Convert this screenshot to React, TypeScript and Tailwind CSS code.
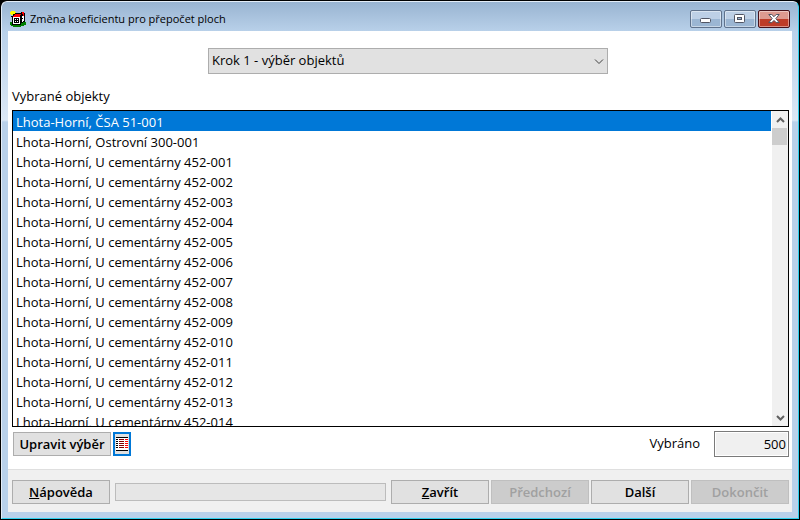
import { useRef, useState } from 'react';
import clsx from 'clsx';

const objects = [
  'Lhota-Horní, ČSA 51-001',
  'Lhota-Horní, Ostrovní 300-001',
  ...Array.from({ length: 14 }, (_, i) => `Lhota-Horní, U cementárny 452-${String(i + 1).padStart(3, '0')}`),
];

const btn =
  'h-6 w-[98px] shrink-0 border border-[#adadad] bg-[#e1e1e1] font-semibold leading-none disabled:border-[#bfbfbf] disabled:bg-[#cccccc] disabled:text-[#a0a0a0]';

function HouseIcon() {
  return (
    <svg width="16" height="16" viewBox="0 0 16 16" shapeRendering="crispEdges" aria-hidden="true">
      <path d="M1 0h4v1h1v3H1V3H0V1h1z" fill="#ffff00" />
      <path d="M0 11h3v-1h11v1h2v3h-2v1h-3v1H3v-1H1v-1H0z" fill="#008000" />
      <path d="M5 2h6V1h3v1h1v9h-2v1h-2v2H2V6H1V5h2V3h2z" fill="#000" />
      <path d="M5 3h6v1h-1v2H3V5h1V4h1z" fill="#ff0000" />
      <path d="M12 1h2v4h-1V3h-1z" fill="#ff0000" />
      <path d="M3 6h7v7H3z" fill="#fff" />
      <path d="M12 5h2v5h-1v1h-1z" fill="#fff" />
      <path d="M4 7h5v5H4z" fill="#000" />
      <path d="M5 8h1v1H5zM7 8h1v1H7zM5 10h1v1H5zM7 10h1v1H7z" fill="#fff" />
      <path d="M12 7h1v1h-1z" fill="#000" />
    </svg>
  );
}

function ListIcon() {
  return (
    <svg width="12" height="14" viewBox="0 0 12 14" shapeRendering="crispEdges" aria-hidden="true">
      <path d="M0 0h12v14H0z" fill="#fff" />
      <path d="M0 0h12v1H0zM0 13h12v1H0z" fill="#000" />
      <path d="M0 2h2v1H0zM0 4h2v1H0zM0 6h2v1H0zM0 8h2v1H0zM0 10h2v1H0z" fill="#000" />
      <path d="M3 2h5v1H3zM3 4h5v1H3zM3 6h5v1H3zM3 8h5v1H3zM3 10h5v1H3z" fill="#800000" />
      <path d="M9 2h3v1H9zM9 4h3v1H9zM9 6h3v1H9zM9 8h3v1H9zM9 10h3v1H9z" fill="#ff0000" />
    </svg>
  );
}

function Chevron({ up = false }: { up?: boolean }) {
  return (
    <svg width="9" height="6" viewBox="0 0 9 6" fill="none" stroke="#606060" strokeWidth="2" aria-hidden="true">
      <path d={up ? 'M1 5l3.5-3.5L8 5' : 'M1 1l3.5 3.5L8 1'} />
    </svg>
  );
}

function TitleBar() {
  const caption = 'flex h-[18px] w-8 items-center justify-center rounded-[2px] border shadow-[inset_0_0_0_1px_#ffffff70]';
  const blue = 'border-[#5f728c] bg-linear-to-b from-[#bdd0e6] from-50% to-[#9bb6d3] to-50%';
  return (
    <header className="flex h-[29px] shrink-0 items-center justify-between px-[2px] pt-[5px]">
      <div className="flex min-w-0 items-center gap-1">
        <HouseIcon />
        <h1 className="truncate text-[11px]">Změna koeficientu pro přepočet ploch</h1>
      </div>
      <div className="flex gap-[2px]">
        <button className={clsx(caption, blue)} aria-label="Minimalizovat">
          <svg width="12" height="8" viewBox="0 0 12 8" aria-hidden="true">
            <rect x=".5" y="3.5" width="10" height="4" rx="1" fill="#fff" stroke="#515563" />
          </svg>
        </button>
        <button className={clsx(caption, blue)} aria-label="Maximalizovat">
          <svg width="12" height="10" viewBox="0 0 12 10" aria-hidden="true">
            <rect x=".5" y=".5" width="10" height="8" rx="1" fill="#fff" stroke="#515563" />
            <rect x="3.5" y="3.5" width="4" height="2" fill="#9bb6d3" stroke="#515563" />
          </svg>
        </button>
        <button
          className={clsx(caption, 'border-[#46111a] bg-linear-to-b from-[#dd9a90] from-50% to-[#bd3c28] to-50%')}
          aria-label="Zavřít okno"
        >
          <svg width="12" height="10" viewBox="0 0 12 10" aria-hidden="true">
            <path d="M.8.5h3L6 2.700 8.200.5h3L7.800 4.600l3.400 4h-3L6 6.400 3.800 8.600h-3l3.400-4z" fill="#fff" stroke="#515563" />
          </svg>
        </button>
      </div>
    </header>
  );
}

function ObjectList() {
  const [selected, setSelected] = useState(0);
  const list = useRef<HTMLUListElement>(null);
  const scroll = (top: number) => list.current?.scrollBy({ top });

  return (
    <div className="flex min-h-0 flex-1 border border-black">
      <ul
        ref={list}
        role="listbox"
        aria-labelledby="objects-label"
        className="mr-px min-w-0 flex-1 overflow-y-auto [scrollbar-width:none]"
      >
        {objects.map((name, i) => (
          <li
            key={name}
            role="option"
            aria-selected={i === selected}
            onClick={() => setSelected(i)}
            className={clsx('h-5 truncate px-[3px] leading-[22px]', i === selected && 'bg-[#0078d7] text-white')}
          >
            {name}
          </li>
        ))}
      </ul>
      {/* posuvník */}
      <div className="flex w-4 flex-col bg-[#f0f0f0]">
        <button className="flex h-[17px] items-center justify-center" onClick={() => scroll(-20)} aria-label="Nahoru">
          <Chevron up />
        </button>
        <div className="mr-px h-[17px] bg-[#cdcdcd]" />
        <button className="mt-auto flex h-[17px] items-center justify-center" onClick={() => scroll(20)} aria-label="Dolů">
          <Chevron />
        </button>
      </div>
    </div>
  );
}

export default function App() {
  return (
    <div className="h-screen bg-black font-['Open_Sans',sans-serif] text-[13px] text-black">
      <div className="h-full overflow-hidden rounded-t-md border border-black">
        <div className="flex h-full flex-col rounded-t-md border border-t-[#e4edf7] border-r-[#2fd0ee] border-b-[#2fd0ee] border-l-[#e4edf7] bg-[linear-gradient(#99b4d1_0px,#b9d1ea_30px,#dce8f5_118px,#b9d1ea_120px)] px-[6px] pb-[6px]">
          <TitleBar />
          <main className="flex min-h-0 flex-1 flex-col bg-white pt-[17px] pr-[3px] pb-3 pl-1">
            <div className="flex justify-center pl-[15px]">
              <div className="relative w-[400px]">
                <select
                  aria-label="Krok"
                  className="h-[26px] w-full appearance-none border border-[#adadad] bg-[#e1e1e1] px-[3px]"
                >
                  <option>Krok 1 - výběr objektů</option>
                </select>
                <svg
                  className="pointer-events-none absolute top-[11px] right-1"
                  width="10"
                  height="6"
                  viewBox="0 0 10 6"
                  fill="none"
                  stroke="#404040"
                  aria-hidden="true"
                >
                  <path d="M1 .5l4 4 4-4" />
                </svg>
              </div>
            </div>
            <h2 id="objects-label" className="mt-3 mb-1 leading-5">Vybrané objekty</h2>
            <ObjectList />
            <div className="mt-1 flex h-[26px] items-center">
              <button className={clsx(btn, 'ml-px')}>Upravit výběr</button>
              <button
                className="ml-[2px] flex h-6 w-[18px] items-center justify-center border-2 border-[#0078d7] bg-[#e1e1e1]"
                aria-label="Seznam"
              >
                <ListIcon />
              </button>
              <label htmlFor="count" className="mr-[14px] ml-auto">Vybráno</label>
              <input
                id="count"
                readOnly
                value="500"
                className="h-[26px] w-[75px] border border-[#7a7a7a] bg-[#f0f0f0] px-[2px] text-right shadow-[inset_0_0_0_1px_#fff] outline-none"
              />
            </div>
          </main>
          <footer className="flex shrink-0 items-center gap-[5px] border-t border-[#dfdfdf] bg-[#f0f0f0] pt-[10px] pr-[3px] pb-2 pl-1">
            <button className={btn}><u>N</u>ápověda</button>
            <div className="h-[18px] flex-1 border border-[#bcbcbc] bg-[#e6e6e6]" />
            <div className="flex gap-[2px]">
              <button className={btn}><u>Z</u>avřít</button>
              <button className={btn} disabled>Předchozí</button>
              <button className={btn}>Další</button>
              <button className={btn} disabled>Dokončit</button>
            </div>
          </footer>
        </div>
      </div>
    </div>
  );
}
